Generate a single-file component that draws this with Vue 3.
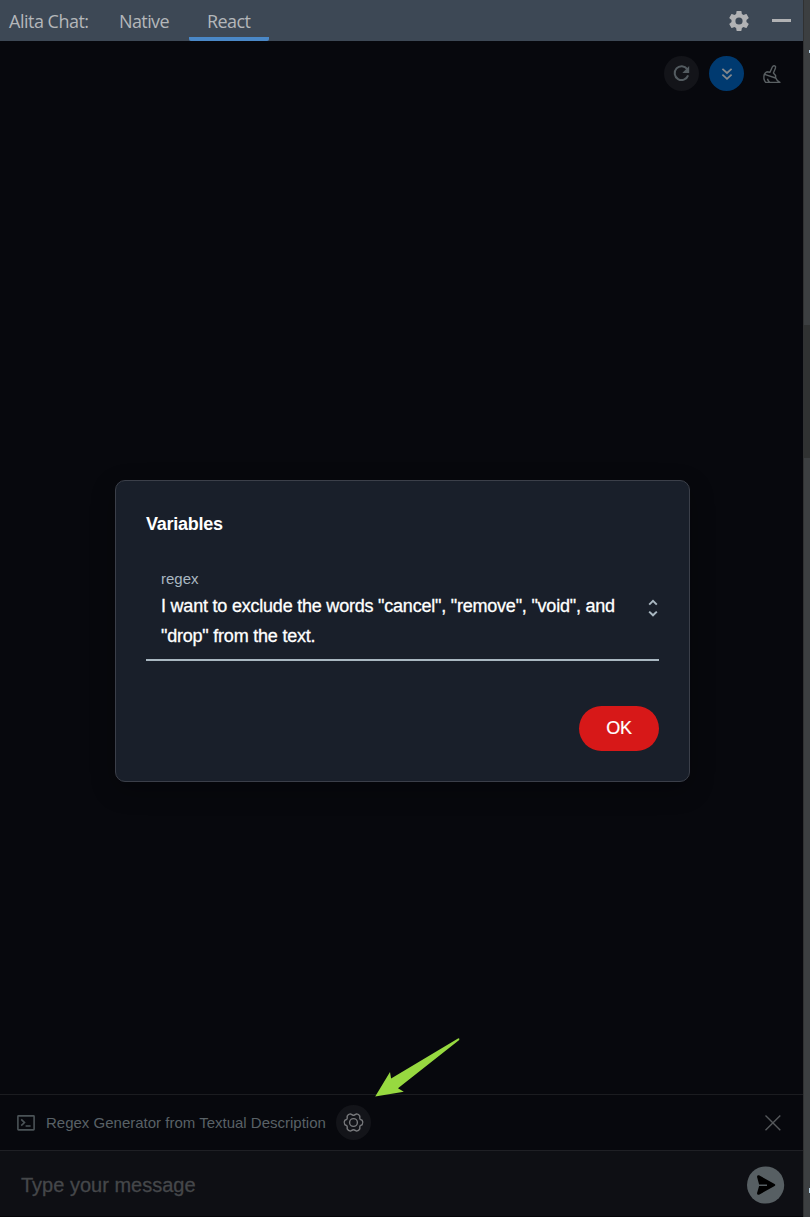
<script setup>
const tabs = [
  { name: 'Native', active: false },
  { name: 'React', active: true },
]
</script>

<template>
  <div class="window">
    <div class="panel">
      <header class="tabbar">
        <span class="title">Alita Chat:</span>
        <span v-for="tab in tabs" :key="tab.name" class="tab" :class="{ active: tab.active }">
          <span class="label">{{ tab.name }}</span>
        </span>
        <svg class="gear" width="24" height="24" viewBox="0 0 24 24">
          <path d="M19.43 12.98c.04-.32.07-.64.07-.98s-.03-.66-.07-.98l2.11-1.65c.19-.15.24-.42.12-.64l-2-3.46c-.12-.22-.39-.3-.61-.22l-2.49 1c-.52-.4-1.08-.73-1.69-.98l-.38-2.65C14.46 2.18 14.25 2 14 2h-4c-.25 0-.46.18-.49.42l-.38 2.65c-.61.25-1.17.59-1.69.98l-2.49-1c-.23-.09-.49 0-.61.22l-2 3.46c-.13.22-.07.49.12.64l2.11 1.65c-.04.32-.07.65-.07.98s.03.66.07.98l-2.11 1.65c-.19.15-.24.42-.12.64l2 3.46c.12.22.39.3.61.22l2.49-1c.52.4 1.08.73 1.69.98l.38 2.65c.03.24.24.42.49.42h4c.25 0 .46-.18.49-.42l.38-2.65c.61-.25 1.17-.59 1.69-.98l2.49 1c.23.09.49 0 .61-.22l2-3.46c.12-.22.07-.49-.12-.64zM12 15.6a3.6 3.6 0 1 1 0-7.2 3.6 3.6 0 0 1 0 7.2z" />
        </svg>
        <span class="minimize"></span>
      </header>

      <main class="chat">
        <div class="tools">
          <span class="round">
            <svg width="35" height="35" viewBox="0 0 35 35">
              <path d="M23.2 13.1A6.9 6.9 0 1 0 24.1 19.4" fill="none" stroke="#535b60" stroke-width="2" />
              <path d="M25.2 10v6.9h-6.9z" fill="#535b60" />
            </svg>
          </span>
          <span class="round blue">
            <svg width="35" height="35" viewBox="0 0 35 35">
              <path d="M13.4 12.8l4.6 4.2 4.6-4.2M13.4 18.7l4.6 4.2 4.6-4.2" fill="none" stroke="#85898d" stroke-width="1.7" />
            </svg>
          </span>
          <svg class="broom" width="20" height="20" viewBox="0 0 20 20">
            <path d="M4.6 7.8L8 8.3 10.3 3Q11.2 1.3 12.8 1.9 14.1 2.6 13.4 4.2L11.4 9.1 13.6 11.4V13.8Q14.8 17 17.9 18.4H3.6Q.9 14.5 2.3 10.4 3.2 8.6 4.6 7.8M2.6 10.4L13.6 14M5.4 14.8Q6 17 7.6 18.4" fill="none" stroke="#5a6063" stroke-width="1.4" stroke-linejoin="round" />
          </svg>
        </div>
      </main>

      <section class="prompt">
        <svg class="terminal" width="20" height="18" viewBox="0 0 20 18">
          <rect x="1.9" y="1.9" width="16.2" height="14" rx=".6" />
          <path d="M5.2 5.4L8.5 8.6 5.2 11.6M9.6 12h5" />
        </svg>
        <span class="prompt-name">Regex Generator from Textual Description</span>
        <span class="round settings">
          <svg width="35" height="35" viewBox="0 0 35 35">
            <path d="M26.2 15.4Q27.6 17.5 26.2 19.6L24.4 20.6Q23.8 21 23.8 21.8V23.9Q22.8 25.8 20.6 26.1L18.4 25Q17.5 24.6 16.6 25L14.4 26.1Q12.2 25.8 11.2 23.9V21.8Q11.2 21 10.6 20.6L8.8 19.6Q7.4 17.5 8.8 15.4L10.6 14.4Q11.2 14 11.2 13.2V11.1Q12.2 9.2 14.4 8.9L16.6 10Q17.5 10.4 18.4 10L20.6 8.9Q22.8 9.2 23.8 11.1V13.2Q23.8 14 24.4 14.4Z" />
            <circle cx="17.5" cy="17.5" r="3.9" />
          </svg>
        </span>
        <svg class="close" width="18" height="18" viewBox="0 0 18 18">
          <path d="M1.5 1.5l14.8 14.8M16.3 1.5L1.5 16.3" />
        </svg>
      </section>

      <footer class="composer">
        <span class="placeholder">Type your message</span>
        <svg class="send" width="38" height="38" viewBox="0 0 38 38">
          <circle cx="18.6" cy="19" r="18.6" fill="#575f63" />
          <path d="M10 10.7Q10.3 8.9 12 9.3L27.6 17.9Q29 19 27.6 20.1L12 28.7Q10.1 29.2 10 27.2L12.1 20H20v-1.5h-7.9z" fill="#000" />
        </svg>
      </footer>

      <div class="dialog">
        <h2>Variables</h2>
        <div class="field">
          <label>regex</label>
          <p>
            <span class="line one">I want to exclude the words "cancel", "remove", "void", and</span>
            <span class="line two">"drop" from the text.</span>
          </p>
          <svg class="sort" width="12" height="20" viewBox="0 0 12 20">
            <path d="M2.2 6.6L6 2.9l3.8 3.7M2.2 13.6L6 17.3l3.8-3.7" />
          </svg>
        </div>
        <button>OK</button>
      </div>

      <svg class="arrow" width="92" height="62" viewBox="0 0 92 62">
        <path d="M5.2 60.6L20 36 21.1 42.4 88 2.4Q90 2 89.2 3.9L28 52.2 33.8 55.8Z" />
      </svg>
    </div>

    <aside class="gutter">
      <span class="thumb"></span>
      <i class="mark top"></i>
      <i class="mark bottom"></i>
    </aside>
  </div>
</template>

<style>
html, body { margin: 0; background: #07080d; }
</style>

<style scoped>
.window {
  display: flex;
  width: 810px;
  height: 1217px;
  overflow: hidden;
  font-family: "Liberation Sans", Arial, sans-serif;
}
.panel {
  position: relative;
  display: flex;
  flex-direction: column;
  width: 803px;
  background: #07080d;
}
.tabbar {
  display: flex;
  align-items: center;
  height: 41px;
  box-sizing: border-box;
  background: #3d4855;
  padding-left: 9px;
  color: #b4b7ba;
  font: 18px/43px "Open Sans", "Noto Sans", sans-serif;
}
.title { width: 92px; height: 41px; white-space: nowrap; letter-spacing: -0.5px; }
.tab {
  width: 80px;
  margin-left: 4px;
  height: 41px;
  box-sizing: border-box;
  padding-left: 14px;
  letter-spacing: -0.6px;
}
.tab.active {
  padding-left: 18px;
  background: linear-gradient(#4a88c7, #4a88c7) bottom / 100% 4px no-repeat;
  border-radius: 2px;
}
.gear { margin-left: 458px; fill: #b1b2b4; }
.minimize { width: 19px; height: 3px; margin-left: 21px; background: #b1b2b4; }
.chat { flex: 1; }
.tools {
  display: flex;
  justify-content: flex-end;
  gap: 10px;
  padding: 15px 21px 0 0;
}
.round {
  width: 35px;
  height: 35px;
  border-radius: 50%;
  background: #131419;
}
.round svg { display: block; }
.blue { background: #003a70; }
.broom { margin: 8px 0 0 8px; }
.prompt {
  display: flex;
  align-items: center;
  height: 57px;
  box-sizing: border-box;
  border-top: 1px solid #1b1c20;
  border-bottom: 1px solid #1f2025;
  padding: 0 21px 0 16px;
}
.terminal { fill: none; stroke: #4b5357; stroke-width: 1.6; }
.prompt-name {
  width: 290px;
  margin-left: 10px;
  white-space: nowrap;
  color: #596166;
  font-size: 15px;
}
.settings svg { fill: none; stroke: #78797c; stroke-width: 1.4; }
.close { margin-left: auto; fill: none; stroke: #55585b; stroke-width: 1.4; }
.composer {
  display: flex;
  align-items: center;
  justify-content: space-between;
  height: 66px;
  padding: 3px 18px 0 21px;
  box-sizing: border-box;
  background: #0e0f14;
  border-bottom: 1px solid #050508;
}
.placeholder { color: #45474a; font-size: 20px; -webkit-text-stroke: 0.3px #45474a; }
.dialog {
  position: absolute;
  left: 115px;
  top: 480px;
  display: flex;
  flex-direction: column;
  width: 575px;
  height: 302px;
  box-sizing: border-box;
  padding: 30px;
  border: 1px solid #3b3f49;
  border-radius: 10px;
  background: #191f2a;
  box-shadow: 0 8px 24px rgba(0, 0, 0, .3);
  color: #fff;
}
h2 {
  margin: 0;
  font-size: 18px;
  line-height: 26px;
  letter-spacing: -0.25px;
}
.field {
  position: relative;
  height: 93px;
  margin-top: 30px;
  padding: 0 15px;
  border-bottom: 2px solid #a9b7c1;
}
label { display: block; color: #a9b7c1; font-size: 15px; line-height: 23px; }
p { margin: 0; font-size: 18px; line-height: 30px; color: #fff; padding-top: 1px; }
.line { display: block; white-space: nowrap; letter-spacing: -0.215px; -webkit-text-stroke: 0.3px #fff; }
.sort {
  position: absolute;
  right: 0;
  top: 31px;
  fill: none;
  stroke: #a9b7c1;
  stroke-width: 2;
}
button {
  align-self: flex-end;
  width: 80px;
  height: 45px;
  margin-top: 45px;
  padding: 0;
  border: 0;
  border-radius: 23px;
  background: #d71818;
  color: #fff;
  font: 18px "Liberation Sans", Arial, sans-serif;
  letter-spacing: -0.3px;
  -webkit-text-stroke: 0.2px #fff;
}
.arrow { position: absolute; left: 370px; top: 1036px; fill: #97d940; }
.gutter {
  position: relative;
  width: 7px;
  box-sizing: border-box;
  background: #3c3f41;
  border-left: 1px solid #303132;
}
.thumb { display: block; height: 133px; margin-top: 325px; background: #303232; }
.mark { position: absolute; right: 0; width: 1px; height: 3px; background: #b8d4e8; }
.top { top: 50px; }
.bottom { top: 1188px; height: 5px; }
</style>
